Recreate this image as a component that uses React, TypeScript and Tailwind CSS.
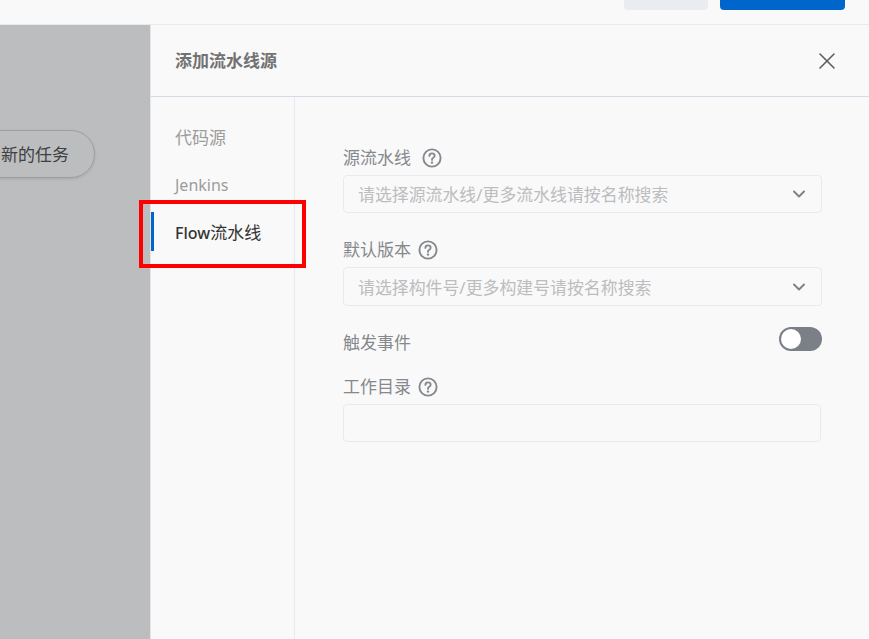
import { ChevronDown, X } from 'lucide-react';

function HelpIcon() {
    return (
        <svg width="20" height="20" viewBox="0 0 20 20" fill="none" className="shrink-0">
            <circle cx="10" cy="10" r="8.6" stroke="#85888d" strokeWidth="1.9" />
            <path d="M7.4 7.9c0-1.5 1.1-2.5 2.6-2.5s2.6 1 2.6 2.3c0 1-.5 1.5-1.3 2-.8.5-1.3 1-1.3 1.9v.3" stroke="#85888d" strokeWidth="1.9" strokeLinecap="round" />
            <circle cx="10" cy="14.6" r="1.2" fill="#85888d" />
        </svg>
    );
}

function SelectBox({ placeholder, className }: { placeholder: string; className: string }) {
    return (
        <div className={`flex items-center justify-between rounded border border-[#e9eaec] pl-[14px] pr-[12px] ${className}`}>
            <span className="pt-[2px] text-[16.9px] text-[#bbbdc0]">{placeholder}</span>
            <ChevronDown size={20} strokeWidth={2.3} className="text-[#7c8087]" />
        </div>
    );
}

export default function App() {
    return (
        <div className="relative flex h-[639px] w-[869px] flex-col overflow-hidden bg-[#f9f9f9] font-['Noto_Sans','Noto_Sans_CJK_SC',sans-serif]">
            {/* Top bar */}
            <div className="flex h-[25px] shrink-0 justify-end gap-3 border-b border-[#e8e9eb] pr-6">
                <div className="h-[10px] w-[84px] rounded-b bg-[#e9edf1]" />
                <div className="h-[10px] w-[125px] rounded-b bg-[#0066cc]" />
            </div>

            <div className="flex min-h-0 flex-1">
                {/* Dimmed page */}
                <div className="w-[150px] shrink-0 bg-[#bcbdbf] pt-[105px]">
                    <div className="-ml-[30px] flex h-12 w-[125px] items-center justify-end rounded-full border border-[#9d9ea0] pr-[25px] pt-[2px] text-[17px] text-[#3f4042] shadow-[0_1px_3px_rgba(0,0,0,0.12)]">
                        新的任务
                    </div>
                </div>

                {/* Drawer */}
                <div className="flex min-w-0 flex-1 flex-col border-l border-[#e3e5e8]">
                    <div className="flex h-[72px] shrink-0 items-center justify-between border-b border-[#d5dbe5] pl-6 pr-[28px]">
                        <span className="pt-[1px] text-[17px] font-bold text-[#727272]">添加流水线源</span>
                        <X size={28} strokeWidth={1.4} className="text-[#5f6063]" />
                    </div>

                    <div className="flex min-h-0 flex-1">
                        <div className="flex w-[144px] shrink-0 flex-col border-r border-[#e8eaed] pt-[16px] text-[17px]">
                            <div className="flex h-12 items-center pl-6 pt-[2px] text-[#9c9c9c]">代码源</div>
                            <div className="flex h-12 items-center pl-6 text-base text-[#9c9c9c]">Jenkins</div>
                            <div className="flex h-12 items-center pl-6 text-[#333333]">
                                <span className="text-base font-medium">Flow</span>
                                <span>流水线</span>
                            </div>
                        </div>

                        <div className="min-w-0 flex-1 pl-12 pr-[47px] pt-[49px] text-[17px] text-[#85888d]">
                            <div className="flex h-6 items-center gap-[11px]">
                                源流水线
                                <HelpIcon />
                            </div>
                            <SelectBox placeholder="请选择源流水线/更多流水线请按名称搜索" className="mt-[5px] h-[38px]" />

                            <div className="mt-[25px] flex h-6 items-center gap-[7px]">
                                默认版本
                                <HelpIcon />
                            </div>
                            <SelectBox placeholder="请选择构件号/更多构建号请按名称搜索" className="mt-[5px] h-[39px]" />

                            <div className="mt-[21px] flex h-6 items-center justify-between">
                                <span className="mt-[8px]">触发事件</span>
                                <div className="flex h-6 w-[43px] items-center rounded-full bg-[#7b7f87] pl-[2px]">
                                    <div className="h-5 w-5 rounded-full bg-white" />
                                </div>
                            </div>

                            <div className="mt-[24px] flex h-6 items-center gap-[7px]">
                                工作目录
                                <HelpIcon />
                            </div>
                            <div className="mr-px mt-[5px] h-[38px] rounded border border-[#e9eaec]" />
                        </div>
                    </div>
                </div>
            </div>

            {/* Active tab marker */}
            <div className="absolute left-[151px] top-[212px] h-[39px] w-[3px] bg-[#0066cc]" />
            {/* Red annotation box */}
            <div className="pointer-events-none absolute left-[139px] top-[200px] h-[68px] w-[167px] border-[4px] border-[#ff0000]" />
        </div>
    );
}
